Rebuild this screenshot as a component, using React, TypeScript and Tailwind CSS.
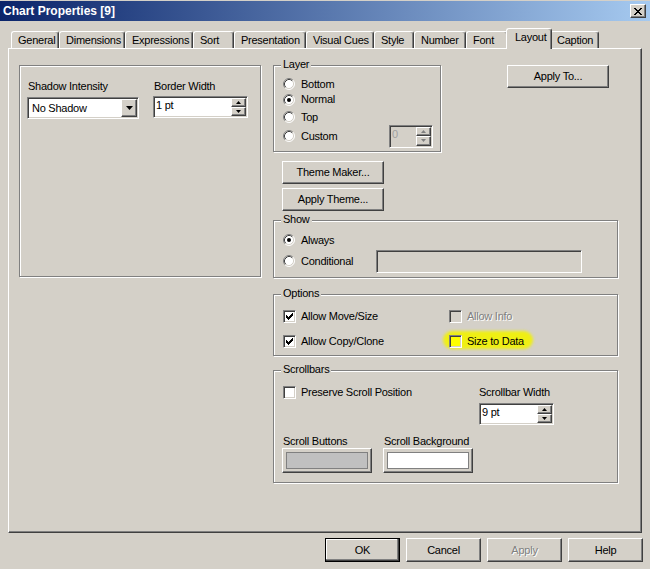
import React from "react";

const FONT = "font-['Liberation_Sans',Arial,sans-serif] text-[11px] leading-[13px] tracking-[-0.25px] text-black";
const RAISED =
  "border border-t-white border-l-white border-r-[#404040] border-b-[#404040] shadow-[inset_-1px_-1px_0_#808080]";
const SUNKEN =
  "border border-t-[#808080] border-l-[#808080] border-r-white border-b-white shadow-[inset_1px_1px_0_#404040,inset_-1px_-1px_0_#d4d0c8]";
const ETCHED = "border border-[#808080] shadow-[inset_1px_1px_0_#ffffff,1px_1px_0_#ffffff]";
const DISABLED_TEXT = "text-[#808080] [text-shadow:1px_1px_0_#ffffff]";

function Btn({
  children,
  className = "",
  disabled = false,
  isDefault = false,
}: {
  children: React.ReactNode;
  className?: string;
  disabled?: boolean;
  isDefault?: boolean;
}) {
  const frame = isDefault
    ? "border border-black shadow-[inset_-1px_-1px_0_#404040,inset_-2px_-2px_0_#808080,inset_1px_1px_0_#ffffff]"
    : RAISED;
  return (
    <div className={`flex items-center justify-center bg-[#d4d0c8] ${frame} ${className}`}>
      <span className={disabled ? DISABLED_TEXT : ""}>{children}</span>
    </div>
  );
}

function Group({
  label,
  className = "",
  children,
}: {
  label?: string;
  className?: string;
  children?: React.ReactNode;
}) {
  return (
    <div className={`relative ${ETCHED} ${className}`}>
      {label && (
        <span className="absolute -top-[8px] left-[7px] px-[2px] bg-[#d4d0c8] leading-[13px]">{label}</span>
      )}
      {children}
    </div>
  );
}

function Radio({ checked = false }: { checked?: boolean }) {
  return (
    <svg width="12" height="12" viewBox="0 0 12 12" className="shrink-0">
      <circle cx="6" cy="6" r="5" fill="#ffffff" />
      <path d="M2.11 9.89 A5.5 5.5 0 0 1 9.89 2.11" stroke="#808080" strokeWidth="1" fill="none" />
      <path d="M9.89 2.11 A5.5 5.5 0 0 1 2.11 9.89" stroke="#ffffff" strokeWidth="1" fill="none" />
      <path d="M2.82 9.18 A4.5 4.5 0 0 1 9.18 2.82" stroke="#404040" strokeWidth="1" fill="none" />
      <path d="M9.18 2.82 A4.5 4.5 0 0 1 2.82 9.18" stroke="#d4d0c8" strokeWidth="1" fill="none" />
      {checked && <circle cx="6" cy="6" r="2" fill="#000000" />}
    </svg>
  );
}

function Check({
  checked = false,
  disabled = false,
  yellow = false,
}: {
  checked?: boolean;
  disabled?: boolean;
  yellow?: boolean;
}) {
  const bg = yellow ? "bg-[#ffff00]" : disabled ? "bg-[#d4d0c8]" : "bg-white";
  return (
    <span className={`w-[13px] h-[13px] shrink-0 flex items-center justify-center ${SUNKEN} ${bg}`}>
      {checked && (
        <svg width="7" height="7" viewBox="0 0 7 7" shapeRendering="crispEdges">
          <path
            d="M6 0h1v1h-1z M5 1h2v1h-2z M0 2h1v1H0z M4 2h3v1H4z M0 3h2v1H0z M3 3h3v1H3z M0 4h5v1H0z M1 5h3v1H1z M2 6h1v1H2z"
            fill="#000000"
          />
        </svg>
      )}
    </span>
  );
}

function SpinArrow({ up, disabled }: { up?: boolean; disabled?: boolean }) {
  const c = disabled ? "#808080" : "#000000";
  return (
    <div className={`flex-1 w-[15px] flex items-center justify-center bg-[#d4d0c8] ${RAISED}`}>
      <svg width="5" height="3" viewBox="0 0 5 3">
        <polygon points={up ? "0,3 5,3 2.5,0" : "0,0 5,0 2.5,3"} fill={c} />
      </svg>
    </div>
  );
}

function Spin({
  value,
  className = "",
  disabled = false,
}: {
  value: string;
  className?: string;
  disabled?: boolean;
}) {
  return (
    <div className={`flex ${SUNKEN} ${disabled ? "bg-[#d4d0c8]" : "bg-white"} ${className}`}>
      <span className={`flex-1 pl-[2px] pt-[2px] ${disabled ? "text-[#a0a0a0]" : ""}`}>{value}</span>
      <div className="flex flex-col py-[1px] pr-[1px]">
        <SpinArrow up disabled={disabled} />
        <SpinArrow disabled={disabled} />
      </div>
    </div>
  );
}

function Dropdown({ value, className = "" }: { value: string; className?: string }) {
  return (
    <div className={`flex bg-white ${SUNKEN} ${className}`}>
      <span className="flex-1 pl-[4px] flex items-center">{value}</span>
      <div className={`m-[1px] w-[16px] flex items-center justify-center bg-[#d4d0c8] ${RAISED}`}>
        <svg width="7" height="4" viewBox="0 0 7 4">
          <polygon points="0,0 7,0 3.5,4" fill="#000000" />
        </svg>
      </div>
    </div>
  );
}

function ColorBtn({ color }: { color: string }) {
  return (
    <div className={`w-[90px] h-[25px] p-[3px] bg-[#d4d0c8] ${RAISED}`}>
      <div className={`w-full h-full border border-[#808080] ${color}`} />
    </div>
  );
}

const TABS: { label: string; w: string; sel?: boolean }[] = [
  { label: "General", w: "w-[48px]" },
  { label: "Dimensions", w: "w-[66px]" },
  { label: "Expressions", w: "w-[68px]" },
  { label: "Sort", w: "w-[41px]" },
  { label: "Presentation", w: "w-[72px]" },
  { label: "Visual Cues", w: "w-[68px]" },
  { label: "Style", w: "w-[40px]" },
  { label: "Number", w: "w-[52px]" },
  { label: "Font", w: "w-[42px]" },
  { label: "Layout", w: "w-[46px]", sel: true },
  { label: "Caption", w: "w-[49px]" },
];

function Tabs() {
  return (
    <div className="relative z-10 flex items-end h-[20px] pl-[3px]">
      {TABS.map((t) =>
        t.sel ? (
          <div
            key={t.label}
            className={`${t.w} relative z-10 h-[21px] -mb-[1px] -mx-[2px] pl-[8px] pt-[2px] bg-[#d4d0c8] whitespace-nowrap overflow-hidden rounded-t-[3px] border-t border-l border-r border-t-white border-l-white border-r-[#404040] shadow-[inset_-1px_0_0_#808080]`}
          >
            {t.label}
          </div>
        ) : (
          <div
            key={t.label}
            className={`${t.w} h-[17px] pl-[6px] flex items-center bg-[#d4d0c8] whitespace-nowrap overflow-hidden rounded-t-[3px] border-t border-l border-r border-t-white border-l-white border-r-[#404040] shadow-[inset_-1px_0_0_#808080]`}
          >
            {t.label}
          </div>
        )
      )}
    </div>
  );
}

export default function App() {
  return (
    <div className={`w-[650px] h-[569px] bg-[#d4d0c8] overflow-hidden flex flex-col ${FONT}`}>
      {/* Title bar */}
      <div className="pt-[1px]">
        <div className="h-[20px] flex items-center justify-between pl-[3px] pr-[4px] bg-[linear-gradient(to_right,#0a246a,#a6caf0)]">
          <span className="text-white font-bold text-[12px] leading-[14px] tracking-normal">Chart Properties [9]</span>
          <div className={`w-[16px] h-[14px] flex items-center justify-center bg-[#d4d0c8] ${RAISED}`}>
            <svg width="8" height="7" viewBox="0 0 8 7" shapeRendering="crispEdges">
              <path
                d="M0 0h2v1H0z M6 0h2v1H6z M1 1h2v1H1z M5 1h2v1H5z M2 2h4v1H2z M3 3h2v1H3z M2 4h4v1H2z M1 5h2v1H1z M5 5h2v1H5z M0 6h2v1H0z M6 6h2v1H6z"
                fill="#000000"
              />
            </svg>
          </div>
        </div>
      </div>

      {/* Tabs and panel */}
      <div className="px-[8px] pt-[7px]">
        <Tabs />
        <div className={`relative h-[485px] flex items-start pt-[16px] pl-[10px] bg-[#d4d0c8] ${RAISED}`}>
          {/* Left group */}
          <Group className="w-[242px] h-[212px] pt-[14px] pl-[7px]">
            <div className="flex">
              <div className="w-[126px]">
                <div className="pl-[1px]">Shadow Intensity</div>
                <Dropdown value="No Shadow" className="mt-[4px] w-[112px] h-[22px]" />
              </div>
              <div>
                <div className="pl-[1px]">Border Width</div>
                <Spin value="1 pt" className="mt-[3px] w-[95px] h-[22px]" />
              </div>
            </div>
          </Group>

          {/* Right column */}
          <div className="ml-[12px] flex flex-col items-start">
            <div className="flex items-start">
              <Group label="Layer" className="w-[168px] h-[87px] pt-[10px] pl-[9px]">
                <div className="h-[16px] flex items-center">
                  <Radio />
                  <span className="ml-[6px]">Bottom</span>
                </div>
                <div className="h-[15px] flex items-center">
                  <Radio checked />
                  <span className="ml-[6px]">Normal</span>
                </div>
                <div className="h-[20px] flex items-center">
                  <Radio />
                  <span className="ml-[6px]">Top</span>
                </div>
                <div className="h-[18px] flex items-center">
                  <div className="w-[106px] flex items-center">
                    <Radio />
                    <span className="ml-[6px]">Custom</span>
                  </div>
                  <Spin value="0" disabled className="w-[44px] h-[23px]" />
                </div>
              </Group>
              <Btn className="ml-[66px] w-[102px] h-[23px]">Apply To...</Btn>
            </div>

            <Btn className="mt-[9px] ml-[9px] w-[102px] h-[23px]">Theme Maker...</Btn>
            <Btn className="mt-[4px] ml-[9px] w-[102px] h-[23px]">Apply Theme...</Btn>

            <Group label="Show" className="mt-[9px] w-[345px] h-[58px] pt-[11px] pl-[9px]">
              <div className="h-[16px] flex items-center">
                <Radio checked />
                <span className="ml-[6px]">Always</span>
              </div>
              <div className="mt-[1px] h-[24px] flex items-center">
                <div className="w-[93px] flex items-center">
                  <Radio />
                  <span className="ml-[6px]">Conditional</span>
                </div>
                <div className={`w-[206px] h-[23px] bg-[#d4d0c8] ${SUNKEN}`} />
              </div>
            </Group>

            <Group label="Options" className="mt-[16px] w-[345px] h-[62px] pt-[12px] pl-[9px]">
              <div className="h-[18px] flex items-center">
                <div className="w-[166px] flex items-center">
                  <Check checked />
                  <span className="ml-[5px]">Allow Move/Size</span>
                </div>
                <div className="flex items-center">
                  <Check disabled />
                  <span className={`ml-[5px] ${DISABLED_TEXT}`}>Allow Info</span>
                </div>
              </div>
              <div className="mt-[7px] h-[18px] flex items-center">
                <div className="w-[166px] flex items-center">
                  <Check checked />
                  <span className="ml-[5px]">Allow Copy/Clone</span>
                </div>
                <div className="relative flex items-center">
                  <span className="absolute -left-[6px] -right-[9px] -top-[4px] -bottom-[1px] rounded-[10px] bg-[#efef14] blur-[1.5px]" />
                  <span className="relative flex items-center">
                    <Check yellow />
                    <span className="ml-[5px]">Size to Data</span>
                  </span>
                </div>
              </div>
            </Group>

            <Group label="Scrollbars" className="mt-[14px] w-[345px] h-[113px] pt-[15px] pl-[9px]">
              <div className="flex">
                <div className="w-[196px] h-[13px] flex items-center">
                  <Check />
                  <span className="ml-[5px]">Preserve Scroll Position</span>
                </div>
                <div className="flex flex-col">
                  <span>Scrollbar Width</span>
                  <Spin value="9 pt" className="mt-[4px] w-[75px] h-[22px]" />
                </div>
              </div>
              <div className="mt-[10px] -ml-[1px] flex">
                <div className="w-[101px]">
                  <div className="pl-[1px]">Scroll Buttons</div>
                  <ColorBtn color="bg-[#c0c0c0]" />
                </div>
                <div>
                  <div className="pl-[1px]">Scroll Background</div>
                  <ColorBtn color="bg-white" />
                </div>
              </div>
            </Group>
          </div>
        </div>
      </div>

      {/* Bottom buttons */}
      <div className="flex justify-end gap-[6px] pr-[7px] pt-[5px]">
        <Btn isDefault className="w-[75px] h-[24px]">OK</Btn>
        <Btn className="w-[75px] h-[24px]">Cancel</Btn>
        <Btn disabled className="w-[75px] h-[24px]">Apply</Btn>
        <Btn className="w-[75px] h-[24px]">Help</Btn>
      </div>
    </div>
  );
}
